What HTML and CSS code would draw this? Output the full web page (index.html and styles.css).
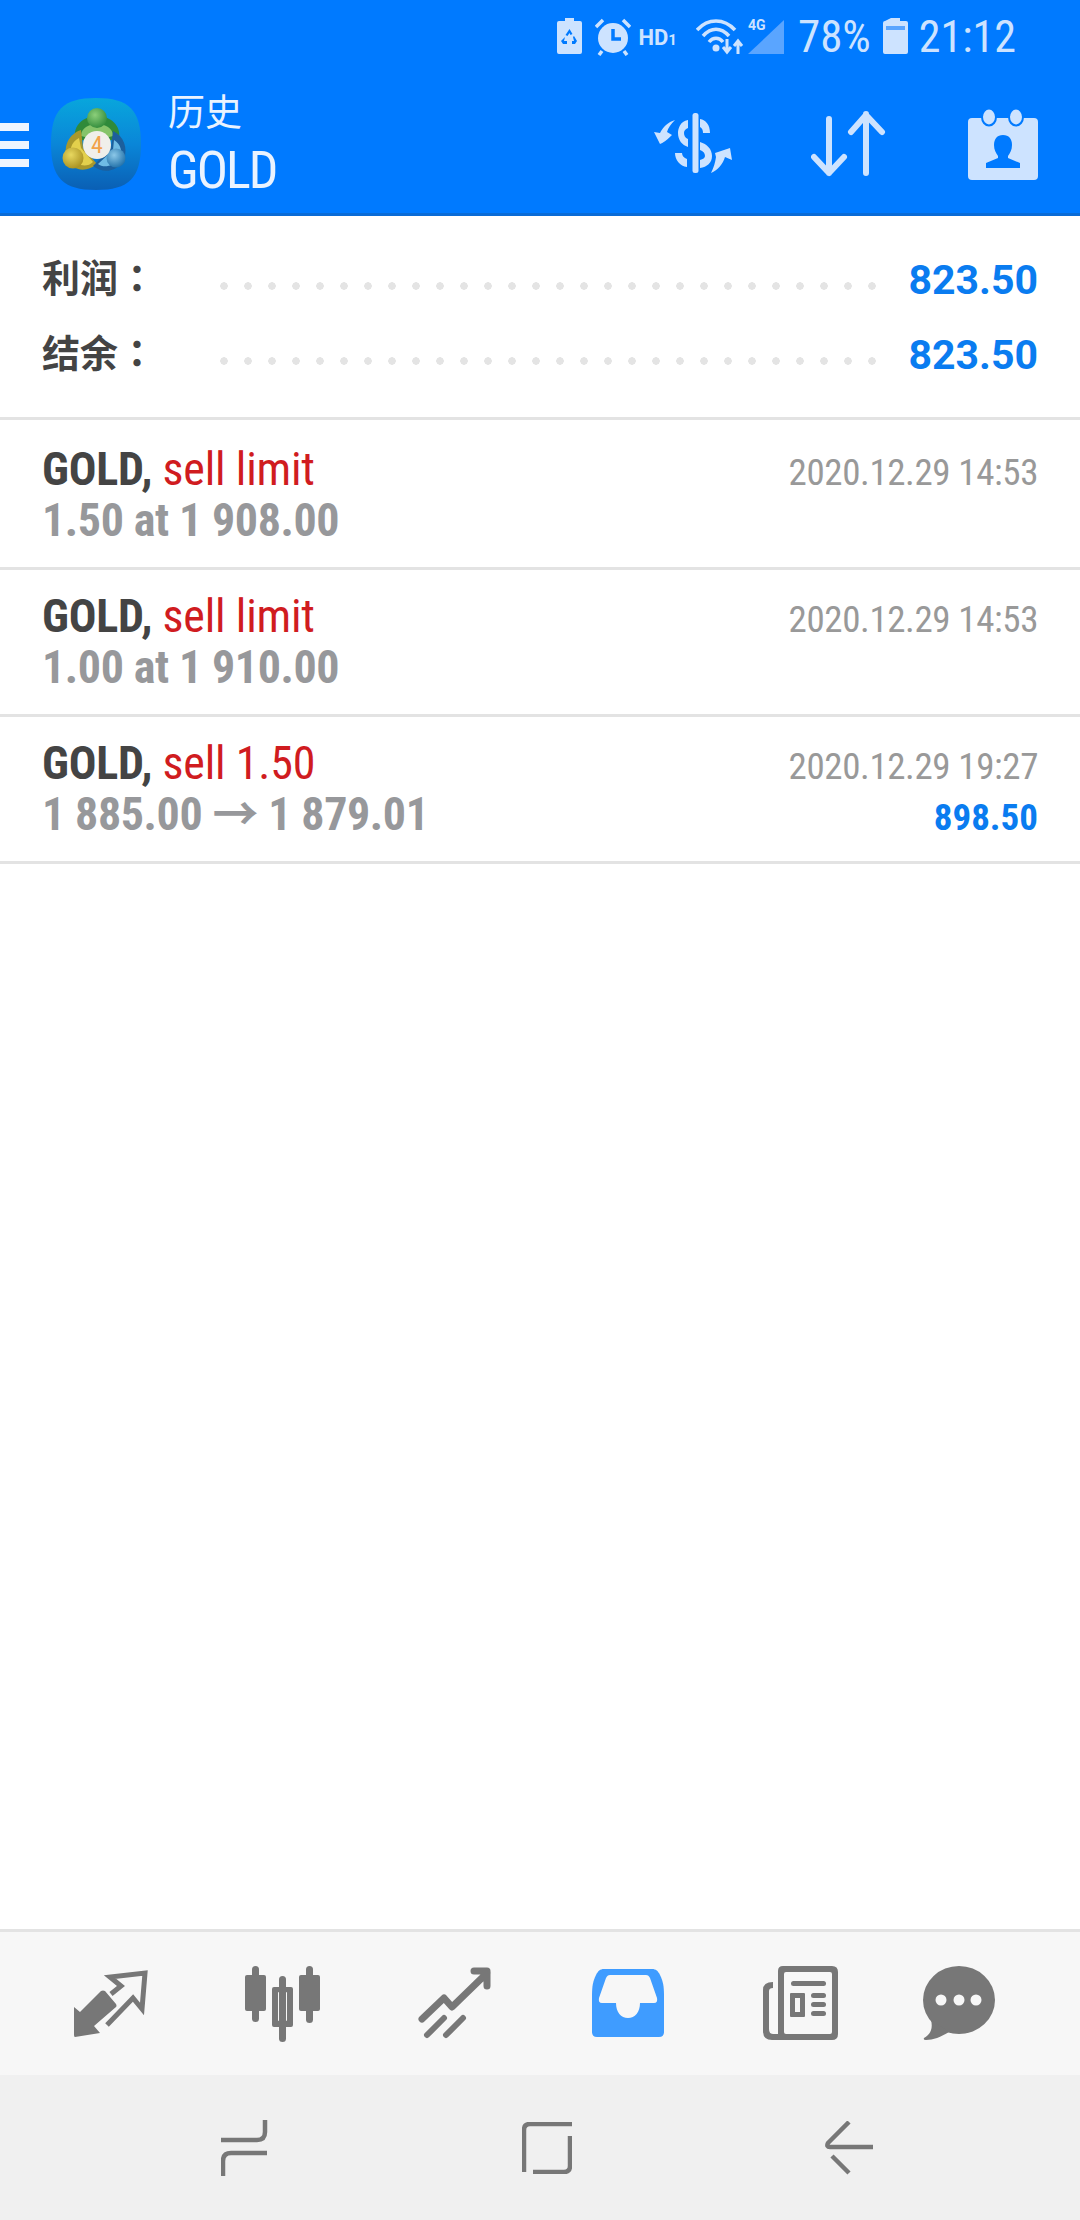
FILE: index.html
```html
<!DOCTYPE html>
<html lang="zh">
<head>
  <meta charset="UTF-8">
  <meta name="viewport" content="width=device-width, initial-scale=1.0">
  <title>历史 GOLD</title>
  <link rel="stylesheet" href="styles.css">
</head>
<body>
  <header class="header">
    <div class="status">
      <svg class="st-icon recycle" width="25" height="36" viewBox="0 0 25 36"><path d="M8 0h9v3h6q2 0 2 2v29q0 2-2 2H2q-2 0-2-2V5q0-2 2-2h6z" fill="#cde3ff"/><path d="M12.500 11l3 5-2 1-1-2-2 3-2-1zM17 18l3 5-2 3h-3v-3h2l-1-4zM8 19l-1 4h3v3H6l-2-3z" fill="#007aff"/></svg>
      <svg class="st-icon alarm" width="36" height="38" viewBox="0 0 36 38"><circle cx="18" cy="20" r="15" fill="#cde3ff"/><path d="M1 9l7-7M35 9l-7-7M7 33l-3 4M29 33l3 4" stroke="#cde3ff" stroke-width="3.500" fill="none"/><path d="M18 11v10h8" stroke="#007aff" stroke-width="3.500" fill="none"/></svg>
      <span class="hd">HD<small>1</small></span>
      <svg class="st-icon wifi" width="48" height="38" viewBox="0 0 48 38"><path d="M1 12C12 0 28 0 39 12M7 18C15 9 25 9 33 18M13 24c4-5 10-5 14 0" stroke="#cde3ff" stroke-width="3.500" fill="none"/><circle cx="20" cy="30" r="3.500" fill="#cde3ff"/><path d="M31 21v12M27 29l4 5 4-5M42 36V24M38 28l4-5 4 5" stroke="#cde3ff" stroke-width="3" fill="none"/></svg>
      <span class="signal"><span class="four-g">4G</span><svg width="36" height="34" viewBox="0 0 36 34"><path d="M36 0v34H0z" fill="#5aa5ff"/></svg></span>
      <span class="st-text pct">78%</span>
      <svg class="st-icon batt" width="25" height="36" viewBox="0 0 25 36"><path d="M8 0h9v3h6q2 0 2 2v29q0 2-2 2H2q-2 0-2-2V5q0-2 2-2z" fill="#cde3ff"/><rect x="3" y="8" width="19" height="4" fill="#5aa5ff"/></svg>
      <span class="st-text">21:12</span>
    </div>
    <div class="toolbar">
      <div class="burger"><i></i><i></i><i></i></div>
      <svg class="logo" width="90" height="92" viewBox="0 0 90 92">
        <defs>
          <linearGradient id="logoBg" x1="0" y1="0" x2="0" y2="1"><stop offset="0" stop-color="#08a6dc"/><stop offset=".5" stop-color="#0a86d8"/><stop offset="1" stop-color="#0a5fb4"/></linearGradient>
          <radialGradient id="ballGreen" cx=".4" cy=".35" r=".7"><stop offset="0" stop-color="#8ccf7a"/><stop offset="1" stop-color="#2f8a3a"/></radialGradient>
          <radialGradient id="ballYellow" cx=".4" cy=".35" r=".7"><stop offset="0" stop-color="#e8d860"/><stop offset="1" stop-color="#a89020"/></radialGradient>
          <radialGradient id="ballBlue" cx=".4" cy=".35" r=".7"><stop offset="0" stop-color="#8cc8e8"/><stop offset="1" stop-color="#1f6fa8"/></radialGradient>
        </defs>
        <path d="M45 0C78 0 90 12 90 46S78 92 45 92 0 80 0 46 12 0 45 0z" fill="url(#logoBg)"/>
        <path d="M24 40C22 28 32 18 46 18 60 18 70 28 68 40L46 46z" fill="#2f8a3a"/>
        <path d="M30 38C30 30 38 26 46 26 54 26 62 30 62 38L46 42z" fill="#86c46a"/>
        <path d="M30 32C18 36 12 48 16 60 20 72 34 76 46 66L32 50z" fill="#a8982c"/>
        <path d="M28 40C20 44 18 52 21 60 26 68 36 70 42 64L30 50z" fill="#e3d04c"/>
        <path d="M62 33C73 38 77 50 73 62 66 74 52 76 42 68L60 50z" fill="#1c5f9c"/>
        <path d="M63 42C70 46 72 54 68 61 62 69 52 70 47 66L62 52z" fill="#6fbbe4"/>
        <circle cx="46" cy="20" r="10" fill="url(#ballGreen)"/>
        <circle cx="22" cy="60" r="10.500" fill="url(#ballYellow)"/>
        <circle cx="65" cy="60" r="9.500" fill="url(#ballBlue)"/>
        <circle cx="46" cy="47" r="14" fill="#f0efea"/>
        <text x="46" y="55" class="logo-four">4</text>
      </svg>
      <div class="titles">
        <div class="title-sub">历史</div>
        <div class="title-main"><span class="cond">GOLD</span></div>
      </div>
      <div class="actions">
        <svg width="80" height="62" viewBox="0 0 80 62"><g fill="#cde3ff"><rect x="38.500" y="0" width="6" height="60" rx="2.500"/><path d="M34 7C26 8 24 16 24 20 24 27 28 32 34 34V26C31 25 30 22 30 20 30 18 31 16 34 15zM46 6C52 7 56 12 56 20H49C49 17 48 15 46 14zM46 29C53 31 58 36 58 43 58 50 53 54 46 55V47C49 46 51 45 51 43 51 40 49 38 46 37zM21 40H28C28 43 30 45 33 46V54C26 53 21 47 21 40zM21 7C14 9 9 14 6 20L0 19 6 31Q10 30 18 22L13 19C14 15 17 11 21 7zM57 60C60 54 61 50 62 44L61 40 76 35 78 47 71 44C69 51 64 57 57 60z"/></g></svg>
        <svg width="76" height="66" viewBox="0 0 76 66"><path d="M18 8v54M3 46l15 16 15-16M55 62V3M40 21L55 4l16 17" stroke="#cde3ff" stroke-width="6" stroke-linecap="round" stroke-linejoin="round" fill="none"/></svg>
        <svg class="cal" width="70" height="72" viewBox="0 0 70 72"><rect x="0" y="10" width="70" height="62" rx="4" fill="#cde3ff"/><g fill="#cde3ff" stroke="#007aff" stroke-width="2"><ellipse cx="21" cy="9" rx="7" ry="8.500"/><ellipse cx="48" cy="9" rx="7" ry="8.500"/></g><path d="M35 27c6 0 9 4 9 10 0 5-2 8-4 11v2l12 5v5H18v-5l12-5v-2c-2-3-4-6-4-11 0-6 3-10 9-10z" fill="#007aff"/></svg>
      </div>
    </div>
  </header>

  <section class="summary">
    <div class="sum-row"><span class="sum-label" lang="zh-Hant">利润：</span><span class="dots"></span><span class="sum-value">823.50</span></div>
    <div class="sum-row"><span class="sum-label" lang="zh-Hant">结余：</span><span class="dots"></span><span class="sum-value">823.50</span></div>
  </section>

  <main class="list">
    <div class="row">
      <div class="row-left">
        <div class="row-title cond"><b>GOLD,</b> <span class="red">sell limit</span></div>
        <div class="row-sub cond">1.50 at 1 908.00</div>
      </div>
      <div class="row-right">
        <div class="row-date cond">2020.12.29 14:53</div>
      </div>
    </div>
    <div class="row">
      <div class="row-left">
        <div class="row-title cond"><b>GOLD,</b> <span class="red">sell limit</span></div>
        <div class="row-sub cond">1.00 at 1 910.00</div>
      </div>
      <div class="row-right">
        <div class="row-date cond">2020.12.29 14:53</div>
      </div>
    </div>
    <div class="row">
      <div class="row-left">
        <div class="row-title cond"><b>GOLD,</b> <span class="red">sell 1.50</span></div>
        <div class="row-sub cond">1 885.00 → 1 879.01</div>
      </div>
      <div class="row-right">
        <div class="row-date cond">2020.12.29 19:27</div>
        <div class="row-profit cond">898.50</div>
      </div>
    </div>
  </main>

  <nav class="tabbar">
    <svg width="76" height="76" viewBox="0 0 76 76"><path d="M2 41l6 5 21-21q2-1 4 0l11 13q1 2 0 3L22 60l6 7-25 4q-1 0-1-2z" fill="#777"/><path d="M39 28l10-8-11-9 35-4-3 36-9-11-26 27" stroke="#777" stroke-width="5" fill="none"/></svg>
    <svg width="76" height="76" viewBox="0 0 76 76"><g fill="#777"><rect x="7" y="0" width="7" height="56" rx="3.500"/><rect x="0" y="9" width="21" height="36" rx="2"/><rect x="34" y="10" width="7" height="66" rx="3.500"/><path d="M29 21h17q2 0 2 2v36q0 2-2 2H29q-2 0-2-2V23q0-2 2-2zm4 6v27q0 1 1 1h7q1 0 1-1V27q0-1-1-1h-7q-1 0-1 1z" fill-rule="evenodd"/><rect x="61" y="0" width="7" height="57" rx="3.500"/><rect x="54" y="9" width="21" height="36" rx="2"/></g></svg>
    <svg width="76" height="76" viewBox="0 0 76 76"><path d="M4 53l22-21 8 9 35-34M56 5h13v15" stroke="#777" stroke-width="7" stroke-linecap="round" stroke-linejoin="round" fill="none"/><path d="M9 69l17-17M28 69l17-17" stroke="#777" stroke-width="6" stroke-linecap="round" fill="none"/></svg>
    <svg class="tab-inbox" width="76" height="76" viewBox="0 0 76 76"><path d="M14 3h48c4 0 6 2 8 6 3 6 4 11 4 21v36q0 5-5 5H7q-5 0-5-5V30c0-10 1-15 4-21 2-4 4-6 8-6z" fill="#3f9cff"/><path d="M20 9h36c2 0 3 1 4 3l7 20q1 5-3 5H50c0 9-5 15-12 15s-12-6-12-15H12q-4 0-3-5l7-20c1-2 2-3 4-3z" fill="#f7f7f7"/></svg>
    <svg width="76" height="76" viewBox="0 0 76 76"><path d="M20 0h49q6 0 6 6v62q0 6-6 6H9q-9 0-9-9V24q0-8 10-8v6q-4 0-4 3v38q0 5 4 5h5V5q0-5 5-5z" fill="#777"/><rect x="21" y="6" width="48" height="62" rx="2" fill="#f7f7f7"/><g fill="#777"><rect x="28" y="15" width="35" height="5" rx="2.500"/><path d="M28 27h13q1 0 1 1v22q0 1-1 1H28q-1 0-1-1V28q0-1 1-1zm4 5v14h5V32z" fill-rule="evenodd"/><rect x="48" y="27" width="15" height="5" rx="2.500"/><rect x="48" y="36" width="15" height="5" rx="2.500"/><rect x="48" y="45" width="15" height="5" rx="2.500"/></g></svg>
    <svg class="tab-last" width="76" height="76" viewBox="0 0 76 76"><ellipse cx="38" cy="34" rx="36" ry="34" fill="#777"/><path d="M10 54c2 8 0 14-7 18q-1 2 2 2c7 0 15-3 23-8z" fill="#777"/><g fill="#f7f7f7"><circle cx="20" cy="34" r="5.500"/><circle cx="38" cy="34" r="5.500"/><circle cx="55" cy="34" r="5.500"/></g></svg>
  </nav>

  <div class="navbar">
    <svg width="48" height="56" viewBox="0 0 48 56"><path d="M44 0v12q0 8-8 8H0M46 33H10q-8 0-8 8v15" stroke="#777" stroke-width="4.500" fill="none"/></svg>
    <svg width="50" height="52" viewBox="0 0 50 52"><path d="M50 2H8Q2 2 2 8v42M48 14v30q0 6-6 6H11" stroke="#777" stroke-width="4.500" fill="none"/></svg>
    <svg width="48" height="54" viewBox="0 0 48 54"><path d="M24 1L3 22q-2 4 2 4h43M7 35l17 17" stroke="#777" stroke-width="4.500" fill="none"/></svg>
  </div>
</body>
</html>
```

FILE: styles.css
```css
* { box-sizing: border-box; }
html, body { height: 100%; }
body { margin: 0; background: #fff; font-family: Roboto, "Noto Sans CJK SC", sans-serif; display: flex; flex-direction: column; color: #444; }
svg { display: block; flex: none; }

.cond { font-family: "Roboto Condensed", "Liberation Sans Narrow", Roboto, "Noto Sans CJK SC", sans-serif; font-stretch: condensed; }

.header { height: 216px; background: #007aff; border-bottom: 3px solid #0a6bd6; flex: none; }
.status { height: 74px; padding: 18px 64px 0 0; display: flex; justify-content: flex-end; align-items: flex-start; color: #cde3ff; }
.st-icon { margin-right: 14px; }
.st-icon.recycle { margin-right: 13px; }
.st-icon.alarm { margin-right: 7px; }
.st-icon.batt { margin-right: 11px; }
.hd { font-size: 22px; font-weight: 700; margin: 8px 19px 0 0; line-height: 24px; }
.hd small { font-size: 15px; }
.st-icon.wifi { margin-right: 4px; }
.signal { position: relative; margin-right: 14px; margin-top: 2px; }
.four-g { position: absolute; left: 0; top: -3px; font-size: 14px; font-weight: 700; }
.st-text { font-size: 44px; line-height: 38px; font-family: "Roboto Condensed", "Liberation Sans Narrow", Roboto, sans-serif; font-stretch: condensed; }
.pct { margin-right: 12px; font-size: 45px; }

.toolbar { display: flex; align-items: center; height: 139px; }
.burger { width: 29px; display: flex; flex-direction: column; gap: 10px; margin: 2px 22px 0 0; }
.burger i { display: block; height: 8px; background: #eef5ff; }
.logo-four { font: 400 24px "Roboto Condensed", Roboto, sans-serif; fill: #f2a24a; text-anchor: middle; }
.titles { margin-left: 27px; color: #eaf3ff; }
.title-sub { font-size: 37px; line-height: 43px; }
.title-main { font-size: 52px; line-height: 60px; letter-spacing: -2px; margin: 6px 0 -6px; }
.actions { margin-left: auto; padding-right: 42px; display: flex; align-items: center; gap: 77px; }
.cal { margin-left: 4px; }

.summary { flex: none; height: 204px; padding: 26px 42px 0; border-bottom: 3px solid #e3e3e3; }
.sum-row { display: flex; align-items: center; height: 75px; }
.sum-label { width: 170px; font-family: Roboto, "Noto Sans CJK TC", sans-serif; font-size: 38px; font-weight: 700; flex: none; margin-bottom: 8px; }
.dots { flex: none; width: 672px; height: 8px; margin-top: 12px; background: radial-gradient(circle at 12px 4px, #e4e4e4 3.5px, transparent 4px) repeat-x; background-size: 24px 8px; }
.sum-value { margin-left: auto; font-size: 41px; font-weight: 700; color: #0a7cf0; }

.list { flex: 1; }
.row { height: 147px; padding: 21px 42px 0; display: flex; justify-content: space-between; border-bottom: 3px solid #e3e3e3; }
.row:first-child { height: 150px; padding-top: 24px; }
.row-title { font-size: 46px; line-height: 50px; letter-spacing: -0.2px; color: #d01c1f; }
.row-title b { color: #444; }
.row-sub { font-size: 46px; line-height: 50px; letter-spacing: -0.4px; font-weight: 700; color: #97989b; margin-top: 1px; }
.row-right { padding-top: 9px; text-align: right; }
.row-date { font-size: 37px; line-height: 40px; letter-spacing: -0.4px; color: #999; }
.row-profit { font-size: 37px; line-height: 40px; font-weight: 700; color: #0a7cf0; margin-top: 11px; }

.tabbar { flex: none; height: 146px; background: #f7f7f7; border-top: 3px solid #e3e3e3; display: flex; align-items: center; padding: 0 0 0 72px; gap: 97px; }
.tab-inbox { margin-left: -1px; }
.tab-last { margin-left: -15px; }
.navbar { flex: none; height: 145px; background: #f0f0f0; display: flex; align-items: center; padding-left: 221px; gap: 253px; }
```
